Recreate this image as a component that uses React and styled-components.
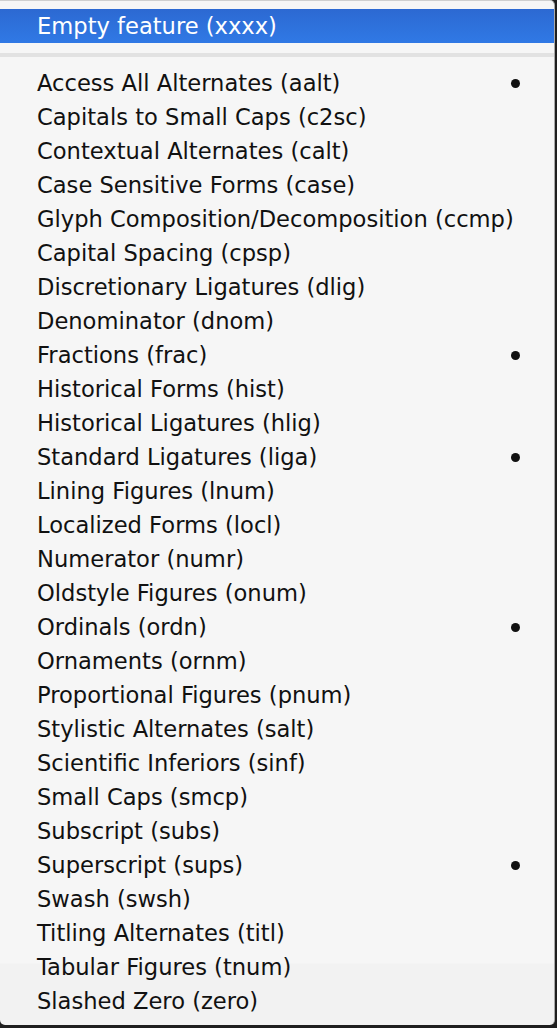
import styled, { createGlobalStyle } from "styled-components";

const GlobalStyle = createGlobalStyle`
  html, body {
    margin: 0;
    padding: 0;
    background: #1f1f1f;
  }
  body {
    font-family: "DejaVu Sans", Verdana, sans-serif;
  }
`;

const features = [
  { name: "Access All Alternates (aalt)", on: true },
  { name: "Capitals to Small Caps (c2sc)" },
  { name: "Contextual Alternates (calt)" },
  { name: "Case Sensitive Forms (case)" },
  { name: "Glyph Composition/Decomposition (ccmp)" },
  { name: "Capital Spacing (cpsp)" },
  { name: "Discretionary Ligatures (dlig)" },
  { name: "Denominator (dnom)" },
  { name: "Fractions (frac)", on: true },
  { name: "Historical Forms (hist)" },
  { name: "Historical Ligatures (hlig)" },
  { name: "Standard Ligatures (liga)", on: true },
  { name: "Lining Figures (lnum)" },
  { name: "Localized Forms (locl)" },
  { name: "Numerator (numr)" },
  { name: "Oldstyle Figures (onum)" },
  { name: "Ordinals (ordn)", on: true },
  { name: "Ornaments (ornm)" },
  { name: "Proportional Figures (pnum)" },
  { name: "Stylistic Alternates (salt)" },
  { name: "Scientific Inferiors (sinf)" },
  { name: "Small Caps (smcp)" },
  { name: "Subscript (subs)" },
  { name: "Superscript (sups)", on: true },
  { name: "Swash (swsh)" },
  { name: "Titling Alternates (titl)" },
  { name: "Tabular Figures (tnum)" },
  { name: "Slashed Zero (zero)" },
];

export default function App() {
  return (
    <>
      <GlobalStyle />
      <Menu>
        <Item $selected>
          <Label>Empty feature (xxxx)</Label>
        </Item>
        <Separator />
        {features.map((f) => (
          <Item key={f.name}>
            <Label>{f.name}</Label>
            {f.on && <Dot />}
          </Item>
        ))}
      </Menu>
    </>
  );
}

const Menu = styled.div`
  width: 555px;
  height: 1025px;
  box-sizing: border-box;
  padding-top: 8px;
  background: linear-gradient(#f6f6f6 0, #f6f6f6 962px, #f2f2f2 963px, #f2f2f2 100%);
  border-top: 1px solid #cfcfcf;
  border-right: 1px solid #a9a9a9;
  border-radius: 0 5px 5px 5px;
  overflow: hidden;
  display: flex;
  flex-direction: column;
`;

const Item = styled.div`
  height: 34px;
  flex-shrink: 0;
  display: flex;
  align-items: center;
  padding-left: 37px;
  padding-right: 34px;
  background: ${(p) => (p.$selected ? "linear-gradient(#2c69d2, #3079e5)" : "transparent")};
  color: ${(p) => (p.$selected ? "#ffffff" : "#111111")};
`;

const Label = styled.span`
  flex: 1;
  font-size: 22.6px;
  line-height: 34px;
  white-space: nowrap;
`;

const Dot = styled.span`
  width: 9px;
  height: 9px;
  border-radius: 50%;
  background: #111111;
`;

const Separator = styled.div`
  height: 23px;
  flex-shrink: 0;
  display: flex;
  align-items: center;
  &::before {
    content: "";
    display: block;
    width: 100%;
    height: 4px;
    background: #e2e2e2;
  }
`;
